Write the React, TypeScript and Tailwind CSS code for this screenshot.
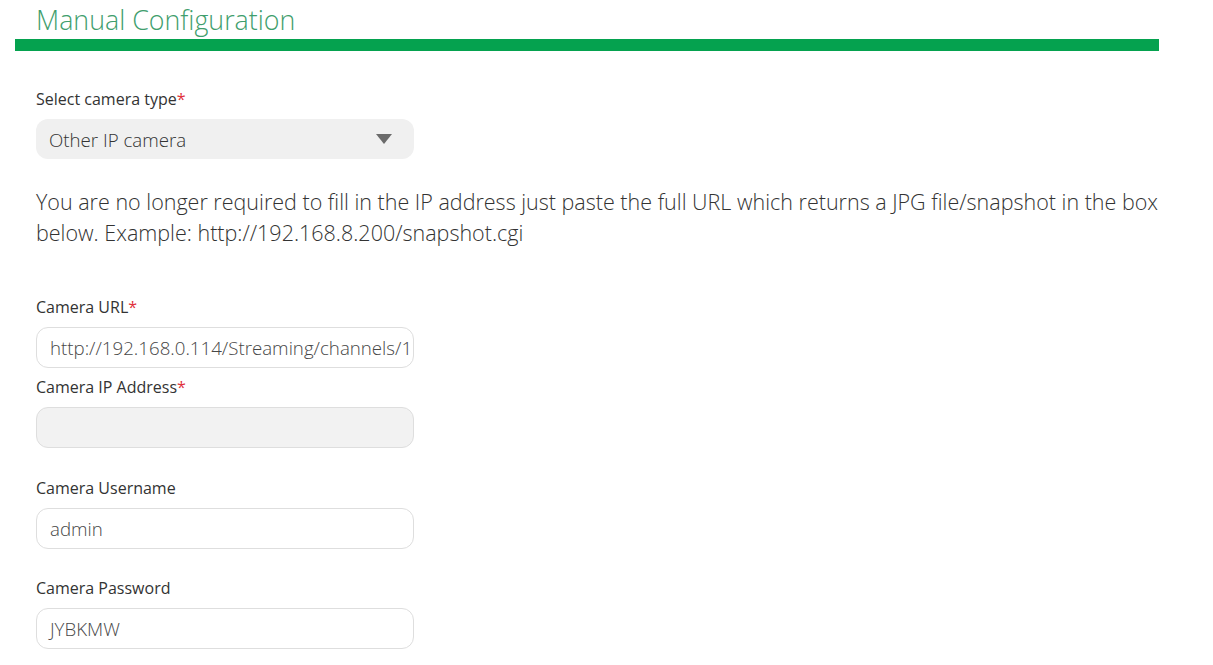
import React from "react";

const font = { fontFamily: '"Open Sans", "Noto Sans", sans-serif' };

function Label({ text, required }: { text: string; required?: boolean }) {
  return (
    <div className="text-[16px] leading-[20px] text-[#333333] font-normal">
      {text}
      {required && <span className="text-[#e0303a]">*</span>}
    </div>
  );
}

function Input({ value, disabled }: { value: string; disabled?: boolean }) {
  return (
    <div
      className={`mt-[10px] w-[378px] h-[41px] rounded-[12px] border border-[#dedede] flex items-center pt-[1px] pl-[13px] pr-0 overflow-hidden whitespace-nowrap text-[18.7px] font-light text-[#474747] ${
        disabled ? "bg-[#f2f2f2]" : "bg-white"
      }`}
    >
      {value}
    </div>
  );
}

export default function App() {
  return (
    <div className="w-[1213px] h-[665px] bg-white overflow-hidden" style={font}>
      <div className="pl-[15px] w-[1159px]">
        <div className="pl-[21px] pt-[2px] text-[26.8px] leading-[35px] font-light text-[#3f9e6d]">
          Manual Configuration
        </div>
        <div className="mt-[2px] h-[12px] bg-[#05a24f]" />
        <div className="pl-[21px]">
          <div className="mt-[38px]">
            <Label text="Select camera type" required />
            <div className="mt-[10px] w-[378px] h-[40px] rounded-[12px] bg-[#f0f0f0] flex items-center justify-between pt-[3px] pl-[13px] pr-[22px] text-[18.7px] font-light text-[#333333]">
              <span>Other IP camera</span>
              <svg width="16" height="10" viewBox="0 0 16 10" className="-mt-[3px]">
                <polygon points="0,0 16,0 8,10" fill="#6b6b6b" />
              </svg>
            </div>
          </div>
          <p className="mt-[27px] text-[21.5px] leading-[31px] font-light text-[#333333]">
            You are no longer required to fill in the IP address just paste the full URL which returns a JPG file/snapshot in the box below. Example: http://192.168.8.200/snapshot.cgi
          </p>
          <div className="mt-[49px]">
            <Label text="Camera URL" required />
            <Input value="http://192.168.0.114/Streaming/channels/1" />
          </div>
          <div className="mt-[9px]">
            <Label text="Camera IP Address" required />
            <Input value="" disabled />
          </div>
          <div className="mt-[30px]">
            <Label text="Camera Username" />
            <Input value="admin" />
          </div>
          <div className="mt-[29px]">
            <Label text="Camera Password" />
            <Input value="JYBKMW" />
          </div>
        </div>
      </div>
    </div>
  );
}
